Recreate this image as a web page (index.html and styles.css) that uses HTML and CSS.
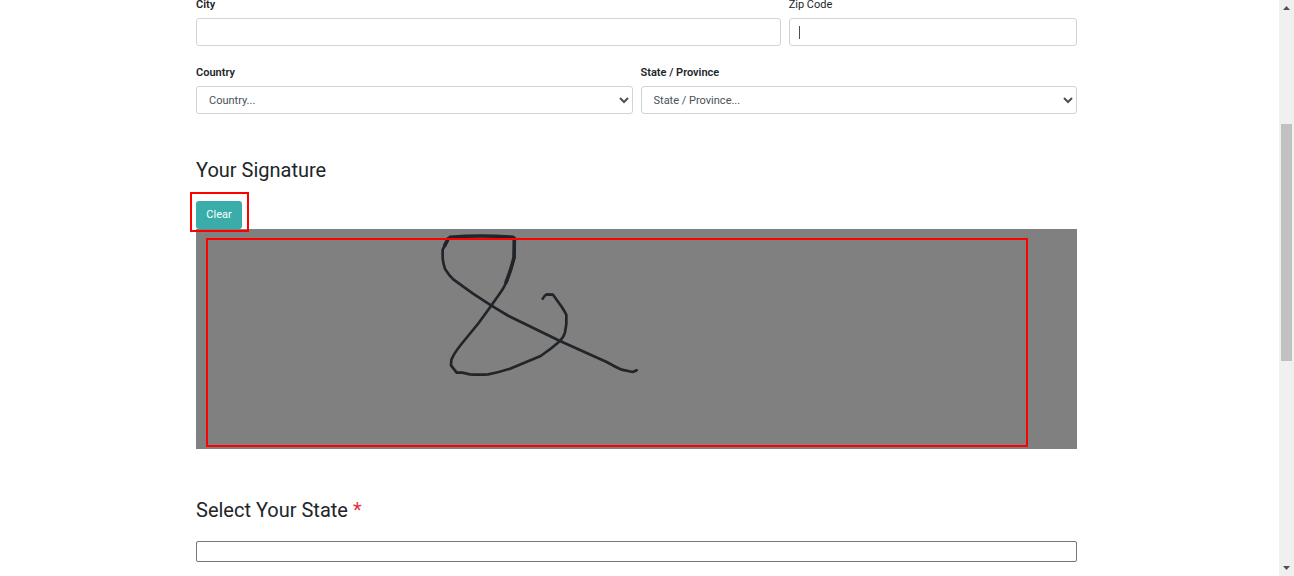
FILE: index.html
```html
<!DOCTYPE html>
<html lang="en">
<head>
<meta charset="utf-8">
<title>Your Signature</title>
<link rel="stylesheet" href="styles.css">
</head>
<body>
<main class="page">
  <form class="form">
    <div class="row">
      <div class="field span-8">
        <label class="label strong" for="city">City</label>
        <input class="control" id="city" type="text">
      </div>
      <div class="field span-4">
        <label class="label" for="zip">Zip Code</label>
        <div class="caret-box">
          <input class="control" id="zip" type="text">
          <span class="caret"></span>
        </div>
      </div>
    </div>
    <div class="row">
      <div class="field span-6">
        <label class="label strong" for="country">Country</label>
        <select class="control select" id="country"><option>Country...</option></select>
      </div>
      <div class="field span-6">
        <label class="label strong" for="state">State / Province</label>
        <select class="control select" id="state"><option>State / Province...</option></select>
      </div>
    </div>
    <section class="section">
      <h2 class="heading">Your Signature</h2>
      <div class="clear-wrap">
        <button class="clear" type="button">Clear</button>
        <span class="mark mark-button"></span>
      </div>
      <div class="pad">
        <svg class="ink" viewBox="0 12 660 468" aria-hidden="true">
          <path d="M56 40 L38 74 L38 100 Q41 122 46 133 Q56 150 71 164 L128 205 L183 241 L236 273 L390 348 L530 411 Q556 426 575 434 L608 441 L620 436"/>
          <path d="M253 44 L253 98 Q243 135 232 164 Q222 188 213 200 L183 243 L146 294 L92 360 Q70 388 64 405 L63 421 L80 443 L97 443 L120 448 Q150 450 175 448 Q210 441 240 431 L332 393 Q366 370 390 348 Q402 335 405 322 L409 297 L409 270 Q406 262 395 245 L369 209 L350 208 Q342 212 338 221"/>
          <path class="ink-wide" d="M60 37 Q152 29 249 37"/>
          <path class="ink-wide" d="M253 40 L252 98 Q242 138 228 172"/>
          <path class="ink-wide" d="M54 42 L44 62"/>
        </svg>
        <span class="mark mark-pad"></span>
      </div>
    </section>
    <section class="section">
      <h2 class="heading"><label for="your-state">Select Your State <span class="required">*</span></label></h2>
      <input class="plain" id="your-state" type="text">
    </section>
  </form>
</main>
<div class="scrollbar" aria-hidden="true">
  <svg class="arrow" viewBox="0 0 15 16"><path d="M4 10h7L7.500 6z"/></svg>
  <div class="track-top"></div>
  <div class="thumb"></div>
  <div class="track-bottom"></div>
  <svg class="arrow" viewBox="0 0 15 16"><path d="M4 6h7L7.500 10z"/></svg>
</div>
</body>
</html>
```

FILE: styles.css
```css
* {
  box-sizing: border-box;
}

body {
  margin: 0;
  display: flex;
  height: 100vh;
  overflow: hidden;
  background: #fff;
  color: #212529;
  font-family: Roboto, "Liberation Sans", sans-serif;
  font-size: 11px;
  line-height: 16px;
}

.page {
  flex: 1;
  min-width: 0;
  overflow: hidden;
  padding: 0 202px 0 196px;
}

.form {
  margin-top: -3px;
}

.row {
  display: grid;
  grid-template-columns: repeat(12, minmax(0, 1fr));
  column-gap: 8px;
  margin-bottom: 19px;
}

.span-8 {
  grid-column: span 8;
}

.span-6 {
  grid-column: span 6;
}

.span-4 {
  grid-column: span 4;
}

.label {
  display: block;
  margin-bottom: 5px;
}

.strong {
  font-weight: 600;
}

.control {
  display: block;
  width: 100%;
  height: 28px;
  padding: 4px 10px;
  border: 1px solid #ced4da;
  border-radius: 3px;
  background: #fff;
  color: #495057;
  font: inherit;
  outline: none;
}

.select {
  padding: 4px 0 4px 8px;
}

.caret-box {
  position: relative;
}

.caret {
  position: absolute;
  left: 10px;
  top: 8px;
  width: 1px;
  height: 13px;
  background: #495057;
}

.section {
  padding-top: 25px;
  margin-bottom: 24px;
}

.heading {
  margin: 0 0 19px;
  font-size: 20px;
  font-weight: 400;
  line-height: 24px;
}

.required {
  color: #dc3545;
}

.clear-wrap {
  position: relative;
  width: max-content;
}

.clear {
  display: block;
  min-width: 46px;
  height: 28px;
  padding: 0 10px;
  border: 0;
  border-radius: 3px;
  background: #3aadaa;
  color: #fff;
  font: inherit;
}

.mark {
  position: absolute;
  z-index: 1;
  border: 2px solid #f00;
  pointer-events: none;
}

.mark-button {
  inset: -9px -7px -3px -6px;
}

.mark-pad {
  inset: 9px 49px 2px 10px;
}

.pad {
  position: relative;
  height: 220px;
  background: #808080;
}

.ink {
  display: block;
  width: 220px;
  height: 156px;
  margin-left: 234px;
  fill: none;
  stroke: #212529;
  stroke-width: 8;
  stroke-linecap: round;
  stroke-linejoin: round;
}

.ink-wide {
  stroke-width: 11;
}

.plain {
  display: block;
  width: 100%;
  height: 21px;
  padding: 1px 2px;
  border: 1px solid #767676;
  border-radius: 2px;
  background: #fff;
  font: inherit;
}

.scrollbar {
  display: flex;
  flex-direction: column;
  width: 15px;
  background: #f0f0f0;
}

.arrow {
  width: 15px;
  height: 16px;
  fill: #505050;
}

.track-top {
  flex: 108;
}

.thumb {
  flex: 237;
  margin: 0 2px;
  background: #c1c1c1;
}

.track-bottom {
  flex: 199;
}
```
